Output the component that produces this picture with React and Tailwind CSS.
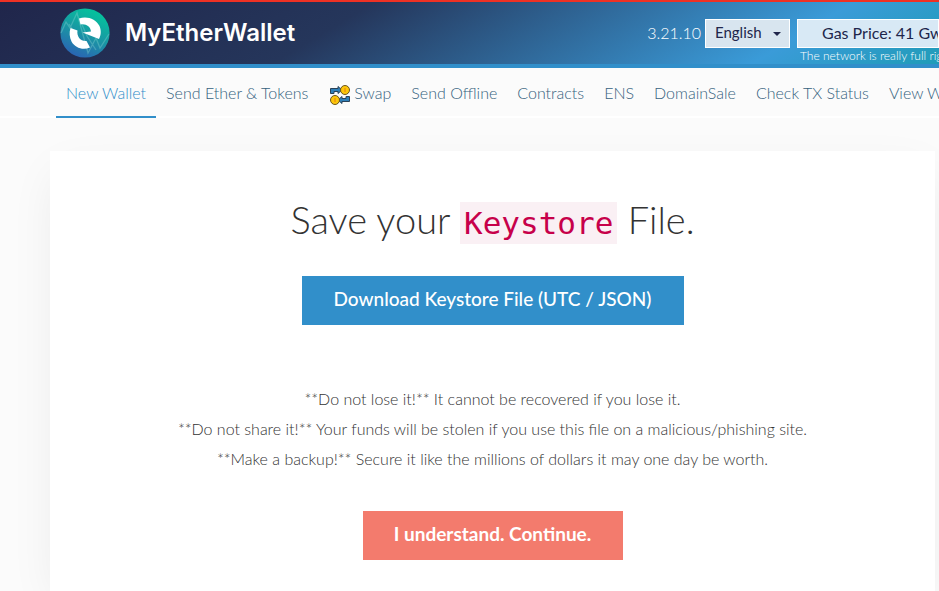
const navItems = [
  { label: 'New Wallet', active: true },
  { label: 'Send Ether & Tokens' },
  { label: 'Swap', icon: true },
  { label: 'Send Offline' },
  { label: 'Contracts' },
  { label: 'ENS' },
  { label: 'DomainSale' },
  { label: 'Check TX Status' },
  { label: 'View Wallet Info' },
];

function Logo() {
  return (
    <svg className="size-[50px] shrink-0" viewBox="0 0 50 50" aria-hidden="true">
      <defs>
        <linearGradient id="logo-fill" x1="0.75" y1="0" x2="0.3" y2="1">
          <stop offset="0.1" stopColor="#06bf9d" />
          <stop offset="0.55" stopColor="#1a94a4" />
          <stop offset="1" stopColor="#2b62b5" />
        </linearGradient>
      </defs>
      <circle cx="25" cy="25" r="24.6" fill="url(#logo-fill)" />
      <path
        d="M1 25 L6 14 L10 20 L17 5 L28 45 L36 30 L40 40 L49 26 M9 16 L20 34 M20 12 L27 28 L36 42"
        fill="none"
        stroke="#7fd0d0"
        strokeOpacity="0.4"
        strokeWidth="1.3"
      />
      <path d="M19 10.500 C27 7.500 36 11 39.500 18 C41.500 23 41 27 39 31 L22.500 24.500 L31 23.500 C30.500 18.500 26 15.500 20.500 16.500 Z" fill="#fff" />
      <path d="M10.500 20 L17.500 22.500 C16.500 28.500 20.500 33.500 26.500 33 L30 39.500 C23 42.500 15 40 11.500 33.500 C9.500 29 9 24.500 10.500 20 Z" fill="#fff" />
    </svg>
  );
}

function SwapIcon() {
  return (
    <svg className="mt-[3px] ml-0.5 size-5 shrink-0" viewBox="0 0 20 20" aria-hidden="true">
      <path d="M.5 8.500V3.500H8V1.500L12 5 8 8.500V6.500H4V8.500z" fill="#2f7fb8" stroke="#2b4258" />
      <path d="M19.500 11.500v5H12v2L8 15l4-3.500v2h4v-2z" fill="#2f7fb8" stroke="#2b4258" />
      <circle cx="15" cy="5" r="4.500" fill="#fcc60b" stroke="#6b5520" />
      <circle cx="5" cy="15" r="4.500" fill="#fcc60b" stroke="#6b5520" />
      <path d="M14 3h2v4h-2zM4 13h2v4H4z" fill="#f3a00c" />
    </svg>
  );
}

export default function App() {
  return (
    <div className="flex min-h-screen flex-col overflow-hidden bg-[#fbfbfb] font-['Lato',sans-serif] font-light text-[#333]">
      <header className="flex h-[68px] shrink-0 items-center justify-between border-t-2 border-b-4 border-t-[#ef3124] border-b-[#318fca] bg-[linear-gradient(149deg,#20264b_0%,#25365b_36%,#3a9bd8_82%,#209cb8_100%)] pl-[60px]">
        <a href="#home" className="flex items-center gap-[15px]">
          <Logo />
          <span className="font-['Inter',sans-serif] text-2xl font-semibold text-white">MyEtherWallet</span>
        </a>
        <div className="flex h-full shrink-0 items-start pt-[17px] text-white">
          <span className="mr-1 text-base leading-7">3.21.10</span>
          <div className="relative mr-[7px]">
            <select aria-label="Language" className="h-[29px] w-[85px] appearance-none border border-white bg-[#d8e5ef] pb-0.5 pl-[9px] text-[15px] font-normal text-[#20264b]">
              <option>English</option>
            </select>
            <span className="pointer-events-none absolute top-[13px] right-[9px] border-x-4 border-t-4 border-x-transparent border-t-[#20264b]" />
          </div>
          <div className="w-[142px]">
            <button type="button" className="h-[29px] w-full overflow-hidden border border-white bg-[#d8e9f5] pb-0.5 pl-6 text-left text-base font-normal whitespace-nowrap text-[#20264b]">
              Gas Price: 41 Gwei
            </button>
            <p className="overflow-hidden pl-[3px] text-xs leading-4 whitespace-nowrap">The network is really full right now.</p>
          </div>
        </div>
      </header>

      <nav className="border-b-2 border-white pl-14">
        <ul className="-mb-0.5 flex text-base leading-6 whitespace-nowrap">
          {navItems.map((item) => (
            <li key={item.label}>
              <a
                href="#nav"
                className={
                  item.active
                    ? 'flex h-[50px] items-center border-b-2 border-[#318fca] px-[10px] pt-0.5 text-[#318fca]'
                    : 'flex h-[50px] items-center gap-1 border-b-2 border-transparent px-[10px] pt-0.5 text-[#35627e]'
                }
              >
                {item.icon && <SwapIcon />}
                {item.label}
              </a>
            </li>
          ))}
        </ul>
      </nav>

      <main className="mt-[33px] mr-1 ml-[50px] flex grow flex-col items-center bg-white px-6 pt-[43px] pb-[31px] text-center shadow-[0_16px_46px_-8px_rgba(0,0,0,0.08)]">
        <h1 className="text-[38px] leading-[50px] font-light">
          Save your{' '}
          <code className="bg-[#faf0f4] px-1 py-[3px] font-['DejaVu_Sans_Mono',monospace] text-[31px] leading-none font-normal text-[#c7004a]">Keystore</code>{' '}
          File.
        </h1>
        <button type="button" className="mt-8 h-[49px] w-[382px] bg-[#318fca] pb-0.5 text-[19px] font-medium text-white">
          Download Keystore File (UTC / JSON)
        </button>
        <div className="mt-[59px] text-base leading-[30px]">
          <p>**Do not lose it!** It cannot be recovered if you lose it.</p>
          <p>**Do not share it!** Your funds will be stolen if you use this file on a malicious/phishing site.</p>
          <p>**Make a backup!** Secure it like the millions of dollars it may one day be worth.</p>
        </div>
        <button type="button" className="mt-[37px] h-[49px] w-[260px] bg-[#f37b6d] pb-0.5 text-[19px] font-bold text-white">
          I understand. Continue.
        </button>
      </main>
    </div>
  );
}
